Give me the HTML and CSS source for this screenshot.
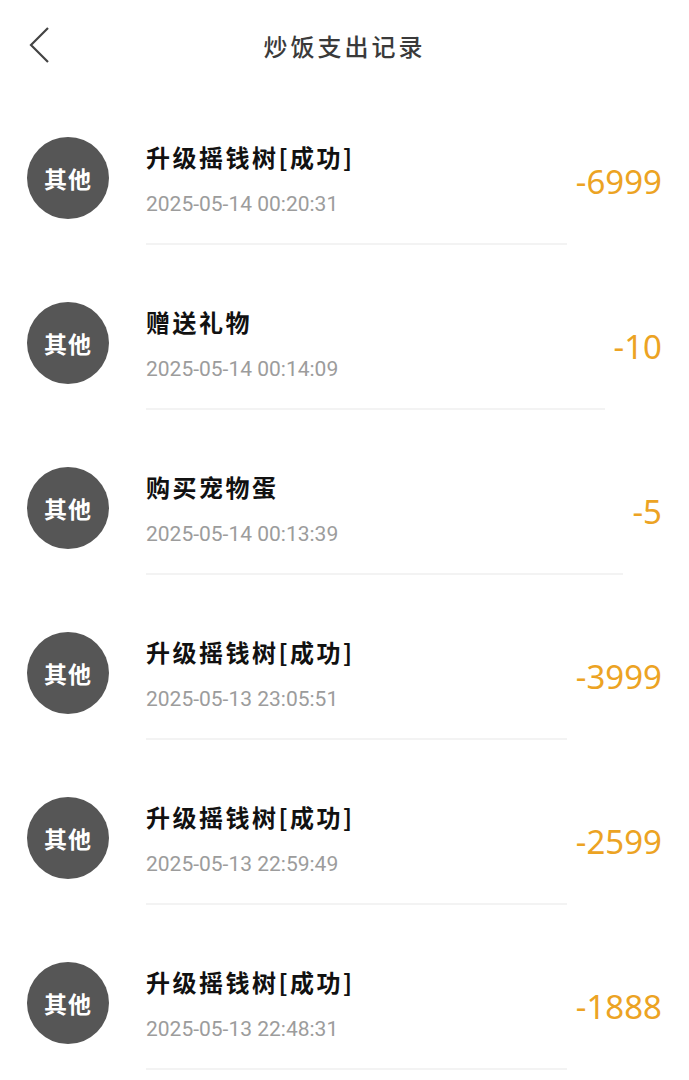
FILE: index.html
```html
<!DOCTYPE html>
<html lang="zh-CN">
<head>
    <meta charset="UTF-8">
    <meta name="viewport" content="width=device-width, initial-scale=1.0">
    <title>炒饭支出记录</title>
    <link rel="stylesheet" href="styles.css">
</head>
<body>
    <header class="topbar">
        <a class="back" href="#">
            <svg width="22" height="38" viewBox="0 0 22 38">
                <polyline points="19,2 2,19 19,36" fill="none" stroke="#444" stroke-width="2.2"/>
            </svg>
        </a>
        <h1 class="title">炒饭支出记录</h1>
    </header>

    <ul class="records">
        <li class="record">
            <div class="avatar">其他</div>
            <div class="info">
                <div class="name">升级摇钱树[成功]</div>
                <div class="time">2025-05-14 00:20:31</div>
            </div>
            <div class="amount">-6999</div>
        </li>
        <li class="record">
            <div class="avatar">其他</div>
            <div class="info">
                <div class="name">赠送礼物</div>
                <div class="time">2025-05-14 00:14:09</div>
            </div>
            <div class="amount">-10</div>
        </li>
        <li class="record">
            <div class="avatar">其他</div>
            <div class="info">
                <div class="name">购买宠物蛋</div>
                <div class="time">2025-05-14 00:13:39</div>
            </div>
            <div class="amount">-5</div>
        </li>
        <li class="record">
            <div class="avatar">其他</div>
            <div class="info">
                <div class="name">升级摇钱树[成功]</div>
                <div class="time">2025-05-13 23:05:51</div>
            </div>
            <div class="amount">-3999</div>
        </li>
        <li class="record">
            <div class="avatar">其他</div>
            <div class="info">
                <div class="name">升级摇钱树[成功]</div>
                <div class="time">2025-05-13 22:59:49</div>
            </div>
            <div class="amount">-2599</div>
        </li>
        <li class="record">
            <div class="avatar">其他</div>
            <div class="info">
                <div class="name">升级摇钱树[成功]</div>
                <div class="time">2025-05-13 22:48:31</div>
            </div>
            <div class="amount">-1888</div>
        </li>
    </ul>
</body>
</html>
```

FILE: styles.css
```css
*{
    box-sizing: border-box;
}
body{
    margin: 0;
    background: #fff;
    font-family: "Noto Sans CJK SC", "Noto Sans", sans-serif;
}
.topbar{
    position: relative;
    height: 80px;
    padding-top: 10px;
    display: flex;
    align-items: center;
    justify-content: center;
}
.back{
    position: absolute;
    left: 29px;
    top: 26px;
    display: block;
    height: 38px;
}
.title{
    margin: 0;
    font-size: 24px;
    font-weight: 500;
    letter-spacing: 3px;
    color: #3a3a3a;
}
.records{
    list-style: none;
    margin: 0;
    padding: 0;
}
.record{
    display: flex;
    align-items: center;
    padding: 0 27px;
    margin-top: 31px;
    height: 134px;
}
.avatar{
    width: 82px;
    height: 82px;
    flex: none;
    border-radius: 50%;
    background: #565656;
    color: #fff;
    font-size: 23px;
    font-weight: 700;
    display: flex;
    align-items: center;
    justify-content: center;
    letter-spacing: 1px;
}
.info{
    flex: 1;
    align-self: stretch;
    margin-left: 37px;
    display: flex;
    flex-direction: column;
    justify-content: center;
    gap: 16px;
    padding-top: 4px;
    border-bottom: 2px solid #f3f3f3;
}
.name{
    font-size: 24px;
    line-height: 34px;
    font-weight: 700;
    letter-spacing: 2.5px;
    color: #111;
}
.time{
    font-family: Roboto, sans-serif;
    font-size: 21px;
    line-height: 28px;
    color: #9c9c9c;
}
.amount{
    margin-left: 9px;
    padding-top: 6px;
    font-family: "Noto Sans", sans-serif;
    font-size: 33px;
    color: #eca323;
}
```
